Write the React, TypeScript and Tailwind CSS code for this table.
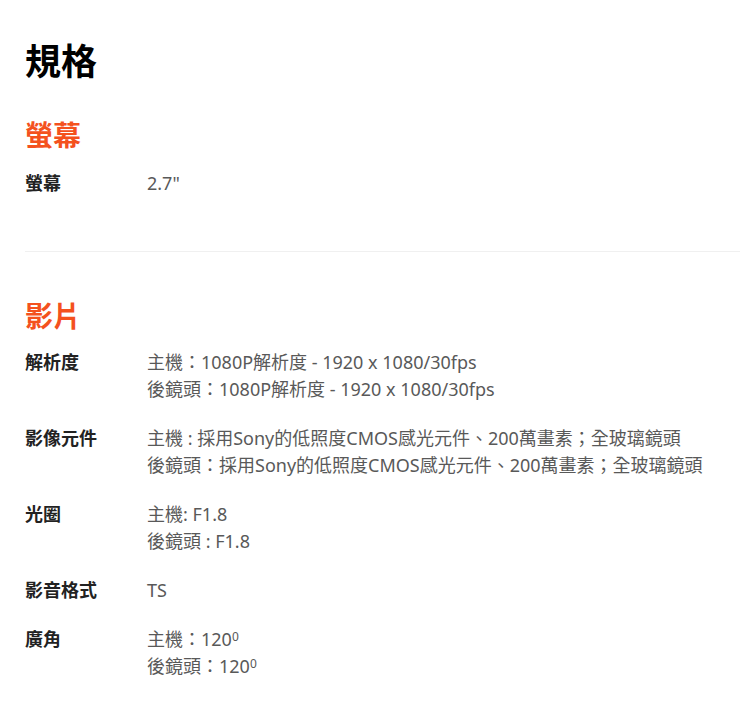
const font = "font-['Noto_Sans','Noto_Sans_CJK_TC',sans-serif]";

type Row = { label: string; lines: React.ReactNode[] };
type Section = { title: string; rows: Row[] };

const Deg = () => (
  <span className="inline-block align-top text-[12px] leading-none relative top-[5px]">0</span>
);

const sections: Section[] = [
  {
    title: "螢幕",
    rows: [{ label: "螢幕", lines: ['2.7"'] }],
  },
  {
    title: "影片",
    rows: [
      {
        label: "解析度",
        lines: [
          "主機：1080P解析度 - 1920 x 1080/30fps",
          "後鏡頭：1080P解析度 - 1920 x 1080/30fps",
        ],
      },
      {
        label: "影像元件",
        lines: [
          "主機 : 採用Sony的低照度CMOS感光元件、200萬畫素；全玻璃鏡頭",
          "後鏡頭：採用Sony的低照度CMOS感光元件、200萬畫素；全玻璃鏡頭",
        ],
      },
      { label: "光圈", lines: ["主機: F1.8", "後鏡頭 : F1.8"] },
      { label: "影音格式", lines: ["TS"] },
      {
        label: "廣角",
        lines: [
          <>主機：120<Deg /></>,
          <>後鏡頭：120<Deg /></>,
        ],
      },
    ],
  },
];

function SpecRow({ row }: { row: Row }) {
  return (
    <div className="flex pb-[22px]">
      <div className="w-[122px] shrink-0 text-[18px] font-bold leading-[27px] text-[#222]">
        {row.label}
      </div>
      <div className="text-[18px] leading-[27px] text-[#595959]">
        {row.lines.map((l, i) => (
          <div key={i}>{l}</div>
        ))}
      </div>
    </div>
  );
}

export default function App() {
  return (
    <div className={`${font} bg-white w-[750px] h-[708px] pl-[25px] pr-[10px] pt-[38px]`}>
      <h1 className="text-[36px] font-bold leading-[48px] text-black">規格</h1>

      {/* 螢幕 */}
      <h2 className="mt-[29px] text-[28px] font-bold leading-[40px] text-[#f4511e]">
        {sections[0].title}
      </h2>
      <div className="mt-[15px]">
        {sections[0].rows.map((r) => (
          <SpecRow key={r.label} row={r} />
        ))}
      </div>

      <div className="mt-[32px] border-t border-[#f0f0f0]" />

      {/* 影片 */}
      <h2 className="mt-[44px] text-[28px] font-bold leading-[40px] text-[#f4511e]">
        {sections[1].title}
      </h2>
      <div className="mt-[13px]">
        {sections[1].rows.map((r) => (
          <SpecRow key={r.label} row={r} />
        ))}
      </div>
    </div>
  );
}
